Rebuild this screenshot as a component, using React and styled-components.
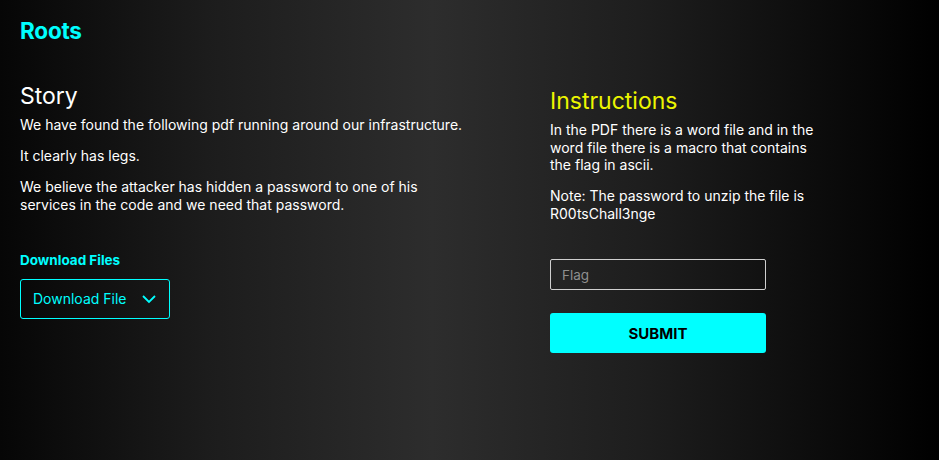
import React from "react";
import styled, { createGlobalStyle } from "styled-components";

const GlobalStyle = createGlobalStyle`
    html, body {
        margin: 0;
        padding: 0;
        height: 100%;
    }
    body {
        font-family: "Inter", "Noto Sans", sans-serif;
        background: #0a0a0a;
    }
    #root {
        min-height: 100%;
    }
`;

// Fondo con degradado horizontal
const Page = styled.div`
    min-height: 460px;
    box-sizing: border-box;
    padding: 17px 20px 0 20px;
    background: linear-gradient(to right, #060606 0%, #1c1c1c 22%, #2d2d2d 46%, #1e1e1e 68%, #000000 100%);
    color: #ffffff;
`;

const Brand = styled.h1`
    margin: 0;
    font-size: 22.5px;
    line-height: 27px;
    font-weight: 700;
    color: #00ffff;
    letter-spacing: -0.2px;
`;

const Columns = styled.div`
    display: grid;
    grid-template-columns: 530px 280px;
    margin-top: 36px;
`;

const Column = styled.section`
    display: flex;
    flex-direction: column;
    align-items: flex-start;
    padding-top: ${(p) => p.$offset || 0}px;
`;

const Heading = styled.h2`
    margin: 0 0 6px 0;
    font-size: 23px;
    font-weight: 400;
    line-height: 28px;
    color: ${(p) => p.$color || "#ffffff"};
`;

const Text = styled.p`
    margin: 0 0 13.5px 0;
    font-size: 14px;
    line-height: 17.5px;
    color: #ffffff;
    max-width: ${(p) => p.$max || "none"};
`;

const Label = styled.div`
    margin-top: 25px;
    font-size: 13.5px;
    line-height: 16px;
    font-weight: 700;
    color: #00ffff;
`;

const Dropdown = styled.button`
    margin-top: 11px;
    width: 150px;
    height: 40px;
    display: flex;
    align-items: center;
    justify-content: space-between;
    padding: 0 12px;
    box-sizing: border-box;
    background: transparent;
    border: 1px solid #00ffff;
    border-radius: 3px;
    color: #00ffff;
    font-family: inherit;
    font-size: 14px;
    cursor: pointer;
`;

const FlagInput = styled.input`
    margin-top: 23.5px;
    width: 216px;
    height: 31px;
    box-sizing: border-box;
    padding: 0 11px;
    background: transparent;
    border: 1px solid #cfcfcf;
    border-radius: 2px;
    color: #ffffff;
    font-family: inherit;
    font-size: 13.5px;
    outline: none;

    &::placeholder {
        color: #8f8f8f;
    }
`;

const SubmitButton = styled.button`
    margin-top: 23px;
    width: 216px;
    height: 40px;
    background: #00ffff;
    border: none;
    border-radius: 3px;
    color: #000000;
    font-family: inherit;
    font-size: 15px;
    font-weight: 700;
    cursor: pointer;
`;

const Chevron = () => (
    <svg width="16" height="10" viewBox="0 0 16 10" fill="none">
        <path d="M2 2 L8 8 L14 2" stroke="#00ffff" strokeWidth="1.8" />
    </svg>
);

export default function App() {
    return (
        <>
            <GlobalStyle />
            <Page>
                <Brand>Roots</Brand>
                <Columns>
                    <Column $offset={2}>
                        <Heading>Story</Heading>
                        <Text>We have found the following pdf running around our infrastructure.</Text>
                        <Text>It clearly has legs.</Text>
                        <Text $max="420px">
                            We believe the attacker has hidden a password to one of his services in the code and we
                            need that password.
                        </Text>
                        <Label>Download Files</Label>
                        <Dropdown>
                            Download File
                            <Chevron />
                        </Dropdown>
                    </Column>
                    <Column $offset={7}>
                        <Heading $color="#ecf500">Instructions</Heading>
                        <Text $max="275px">
                            In the PDF there is a word file and in the word file there is a macro that contains the flag
                            in ascii.
                        </Text>
                        <Text $max="275px">Note: The password to unzip the file is R00tsChall3nge</Text>
                        <FlagInput placeholder="Flag" />
                        <SubmitButton>SUBMIT</SubmitButton>
                    </Column>
                </Columns>
            </Page>
        </>
    );
}
